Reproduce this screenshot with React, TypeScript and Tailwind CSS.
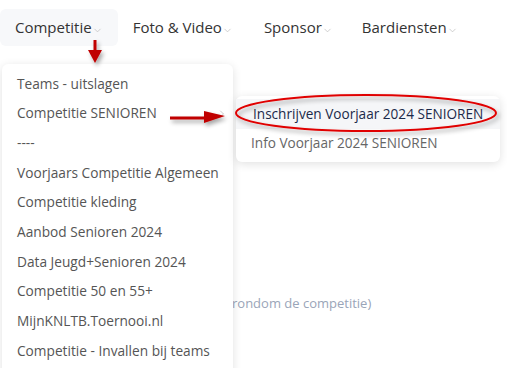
import { ChevronDown, ChevronRight } from 'lucide-react';

const navItems = ['Competitie', 'Foto & Video', 'Sponsor', 'Bardiensten'];

const menuItems = [
  'Teams - uitslagen',
  'Competitie SENIOREN',
  '----',
  'Voorjaars Competitie Algemeen',
  'Competitie kleding',
  'Aanbod Senioren 2024',
  'Data Jeugd+Senioren 2024',
  'Competitie 50 en 55+',
  'MijnKNLTB.Toernooi.nl',
  'Competitie - Invallen bij teams',
];

export default function App() {
  return (
    <div
      className="relative w-[507px] h-[368px] overflow-hidden bg-white"
      style={{ fontFamily: '"Open Sans", "Noto Sans", sans-serif' }}
    >
      {/* Top navigation */}
      <nav className="flex items-center pt-[9px]">
        {navItems.map((item, i) => (
          <div
            key={item}
            className={`flex items-center h-[37px] px-[15px] rounded-md text-[15px] text-[#333] ${
              i === 0 ? 'bg-[#f7f8fa]' : ''
            } ${i === 2 ? 'ml-[1px]' : ''} ${i === 3 ? '-ml-[1px]' : ''}`}
          >
            <span>{item}</span>
            <ChevronDown className="w-[11px] h-[11px] text-[#bbb] mt-[6px]" strokeWidth={1.5} />
          </div>
        ))}
      </nav>

      {/* Page content behind the menu */}
      <div className="absolute left-[232px] top-[294px] text-[13px] text-[#9aa5b8]">
        rondom de competitie)
      </div>

      {/* Dropdown */}
      <div className="absolute left-[2px] top-[64px] w-[231px] h-[320px] bg-white rounded-md shadow-[0_2px_10px_rgba(0,0,0,0.12)] pt-[5px]">
        {menuItems.map((item, i) => (
          <div
            key={item}
            className="flex items-center justify-between h-[29.7px] pl-[15px] pr-[5px] text-[13.7px] text-[#555]"
          >
            <span>{item}</span>
            {i === 1 && <ChevronRight className="w-[12px] h-[12px] text-[#bbb]" strokeWidth={1.5} />}
          </div>
        ))}
      </div>

      {/* Submenu */}
      <div className="absolute left-[236px] top-[96px] w-[264px] bg-white rounded-md shadow-[0_2px_10px_rgba(0,0,0,0.12)] pt-[3px] pb-[5px]">
        <div className="flex items-center h-[30px] pl-[17px] text-[13.6px] text-[#1c2a4a] bg-[#f5f6f8]">
          Inschrijven Voorjaar 2024 SENIOREN
        </div>
        <div className="flex items-center h-[28px] pl-[15px] text-[13.6px] text-[#666]">
          Info Voorjaar 2024 SENIOREN
        </div>
      </div>

      {/* Red annotations */}
      <svg className="absolute inset-0 pointer-events-none" width="507" height="368">
        <defs>
          <filter id="sh" x="-20%" y="-20%" width="140%" height="160%">
            <feDropShadow dx="2" dy="3" stdDeviation="2" floodColor="#000" floodOpacity="0.35" />
          </filter>
        </defs>
        <g filter="url(#sh)">
          <line x1="95" y1="40" x2="95" y2="52" stroke="#c00000" strokeWidth="3" />
          <polygon points="88,50 102,50 95,63" fill="#c00000" />
          <line x1="170" y1="118" x2="207" y2="118" stroke="#c00000" strokeWidth="3" />
          <polygon points="204,111 225,116 204,123" fill="#c00000" />
          <ellipse cx="366" cy="113" rx="130" ry="18" fill="none" stroke="#e00000" strokeWidth="2" />
        </g>
      </svg>
    </div>
  );
}
